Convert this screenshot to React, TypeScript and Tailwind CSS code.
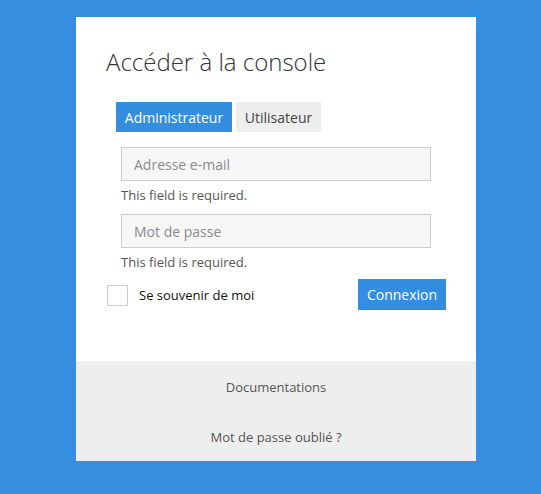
import React from 'react';

const font = { fontFamily: '"Open Sans", "Liberation Sans", sans-serif' };

function Field({ placeholder }: { placeholder: string }) {
  return (
    <div className="ml-[45px]">
      <div className="w-[310px] h-[34px] border border-[#cccccc] bg-[#f7f7f7] pl-[12px] flex items-center text-[14px] text-[#8a8a8a]">
        {placeholder}
      </div>
      <p className="mt-[5px] h-[18px] leading-[18px] text-[13px] text-[#555555]">This field is required.</p>
    </div>
  );
}

export default function App() {
  return (
    <div className="min-h-[494px] w-full bg-[#368ee0] pt-[17px]" style={font}>
      <div className="ml-[76px] w-[400px] bg-white">
        <div className="pt-[29px]">
          <h1 className="pl-[30px] text-[24px] leading-[32px] font-light text-[#333333]">Accéder à la console</h1>

          <div className="mt-[24px] ml-[40px] flex gap-[4px] text-[14px]">
            <button className="w-[116px] h-[30px] bg-[#348ee0] text-white">Administrateur</button>
            <button className="w-[85px] h-[30px] bg-[#eeeeee] text-[#444444]">Utilisateur</button>
          </div>

          <div className="mt-[15px] flex flex-col gap-[10px]">
            <Field placeholder="Adresse e-mail" />
            <Field placeholder="Mot de passe" />
          </div>

          <div className="mt-[8px] pl-[31px] pr-[30px] flex items-center justify-between">
            <label className="flex items-center gap-[11px] text-[13px] text-[#111111] pt-[2px]">
              <span className="block w-[21px] h-[21px] border border-[#cccccc] bg-white" />
              Se souvenir de moi
            </label>
            <button className="w-[88px] h-[31px] bg-[#348ee0] text-white text-[14px]">Connexion</button>
          </div>
        </div>

        <div className="mt-[51px] bg-[#eeeeee] h-[100px] pt-[16px] flex flex-col items-center text-[13px] text-[#555555]">
          <a className="leading-[20px]">Documentations</a>
          <a className="mt-[30px] leading-[20px]">Mot de passe oublié ?</a>
        </div>
      </div>
    </div>
  );
}
